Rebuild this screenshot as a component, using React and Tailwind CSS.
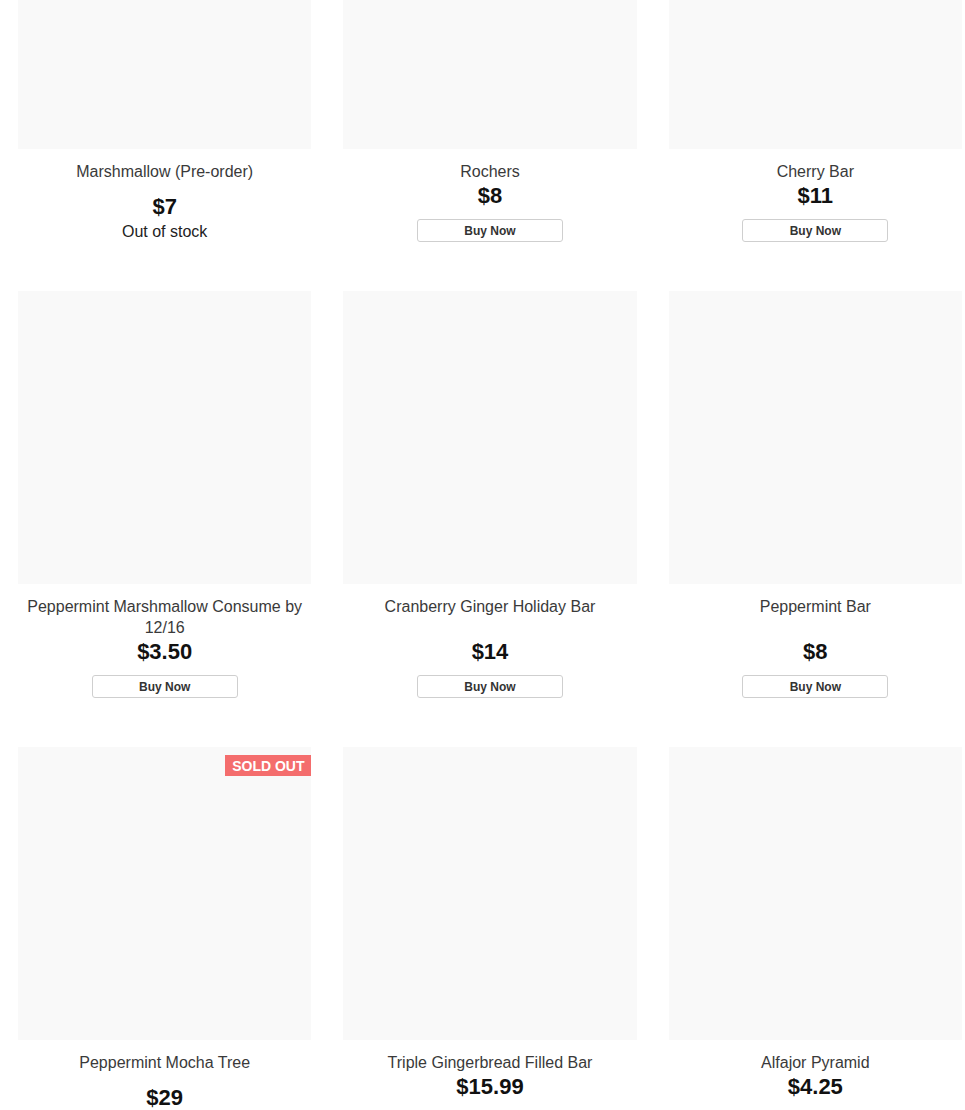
import React from 'react';

const rows = [
  {
    tall: false,
    items: [
      { name: 'Marshmallow (Pre-order)', price: '$7', outOfStock: true },
      { name: 'Rochers', price: '$8' },
      { name: 'Cherry Bar', price: '$11' },
    ],
  },
  {
    tall: true,
    items: [
      { name: 'Peppermint Marshmallow Consume by 12/16', price: '$3.50' },
      { name: 'Cranberry Ginger Holiday Bar', price: '$14' },
      { name: 'Peppermint Bar', price: '$8' },
    ],
  },
  {
    tall: false,
    items: [
      { name: 'Peppermint Mocha Tree', price: '$29', soldOut: true },
      { name: 'Triple Gingerbread Filled Bar', price: '$15.99' },
      { name: 'Alfajor Pyramid', price: '$4.25' },
    ],
  },
];

function ProductCard({ item, tall }) {
  return (
    <div className="flex flex-col items-center text-center">
      {/* image placeholder */}
      <div className="relative w-full h-[293px] bg-[#f9f9f9]">
        {item.soldOut && (
          <span className="absolute top-[8px] right-0 w-[86px] h-[21px] flex items-center justify-center bg-[#f46d6d] text-white text-[14px] font-bold leading-none">
            SOLD OUT
          </span>
        )}
      </div>
      <div className={`mt-[12px] px-2 text-[16px] leading-[21px] text-[#3a3a3a] ${tall ? 'min-h-[42px]' : ''}`}>
        {item.name}
      </div>
      <div className={`text-[22px] leading-[28px] font-bold text-[#111] ${item.outOfStock || item.soldOut ? 'mt-[11px]' : ''}`}>
        {item.price}
      </div>
      {item.outOfStock ? (
        <div className="text-[16px] leading-[21px] text-[#222]">Out of stock</div>
      ) : (
        <button className="mt-[9px] w-[146px] h-[23px] border border-[#cfcfcf] rounded-[3px] bg-white text-[12px] font-bold text-[#333] leading-none">
          Buy Now
        </button>
      )}
    </div>
  );
}

export default function App() {
  return (
    <div className="w-[965px] h-[1110px] overflow-hidden bg-white" style={{ fontFamily: '"Liberation Sans", Arial, sans-serif' }}>
      <div className="mt-[-144px] pl-[18px] pr-[3px] grid grid-cols-3 gap-x-[32px] gap-y-[49px]">
        {rows.map((row, r) =>
          row.items.map((item, i) => <ProductCard key={`${r}-${i}`} item={item} tall={row.tall} />)
        )}
      </div>
    </div>
  );
}
